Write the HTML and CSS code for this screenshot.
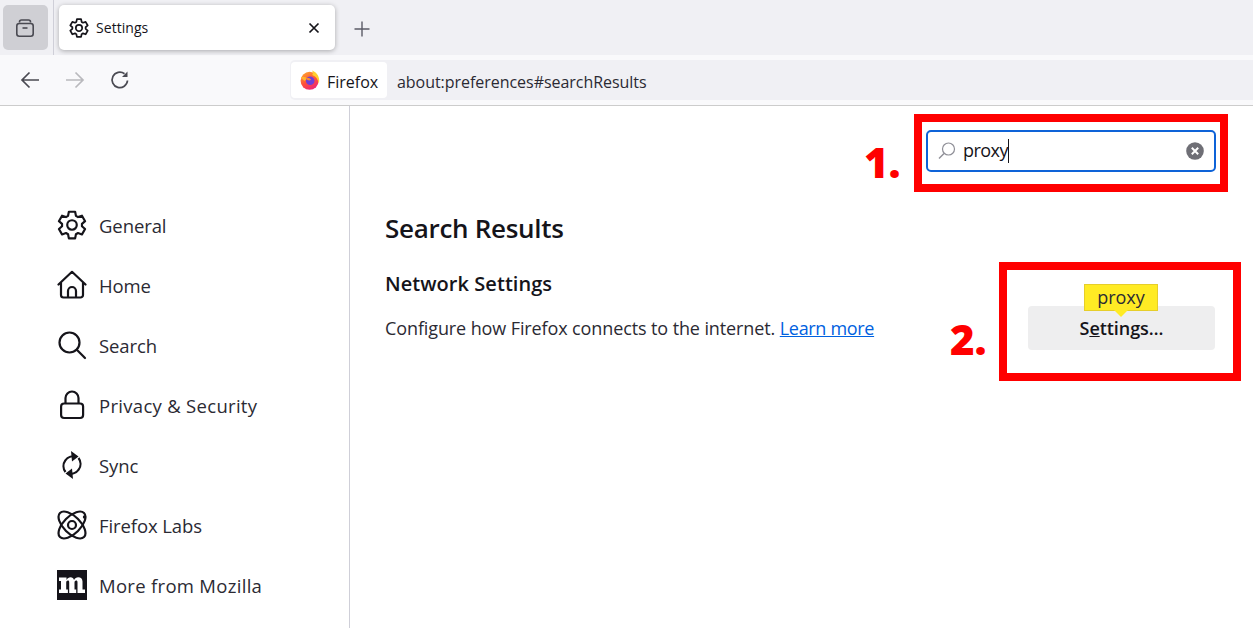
FILE: index.html
```html
<!DOCTYPE html>
<html lang="en">
<head>
<meta charset="utf-8">
<title>Settings</title>
<link rel="stylesheet" href="styles.css">
</head>
<body>
<div class="tabbar">
  <div class="tabs-btn"><svg class="i20" viewBox="0 0 20 20" fill="none" stroke="#4a4a52" stroke-width="1.6"><path d="M4.5 4.5V4a2 2 0 0 1 2-2h7a2 2 0 0 1 2 2v.5"/><rect x="1.8" y="5.5" width="16.4" height="12.7" rx="2.5"/><path d="M7.5 10h5"/></svg></div>
  <div class="divider"></div>
  <div class="tab">
    <svg class="i20" viewBox="1 1 22 22" fill="none" stroke="#15141a" stroke-width="1.9" stroke-linejoin="round"><use href="#gear"/></svg>
    <span class="tab-title">Settings</span>
    <svg class="tab-x" viewBox="0 0 12 12" stroke="#15141a" stroke-width="1.7" fill="none"><path d="M1.500 1.500l9 9M10.500 1.500l-9 9"/></svg>
  </div>
  <svg class="newtab" viewBox="0 0 16 16" stroke="#5b5b66" stroke-width="1.4" fill="none"><path d="M8 .5v15M.5 8h15"/></svg>
</div>
<div class="toolbar">
  <div class="nav">
    <svg class="i20" viewBox="0 0 20 20" fill="none" stroke="#4a4a52" stroke-width="1.7"><path d="M19 10H2M9.500 2.500L2 10l7.500 7.500"/></svg>
    <svg class="i20" viewBox="0 0 20 20" fill="none" stroke="#b9b9bd" stroke-width="1.7"><path d="M1 10h17M10.500 2.500L18 10l-7.500 7.500"/></svg>
    <svg class="i20" viewBox="0 0 20 20" fill="none" stroke="#4a4a52" stroke-width="1.7"><path d="M17.500 10.500A7.700 7.700 0 1 1 14.500 3.800"/><path d="M17.500 1.500v5.500h-5.500z" fill="#4a4a52" stroke="none"/></svg>
  </div>
  <div class="urlbar">
    <div class="identity">
      <svg class="fx" viewBox="0 0 20 20">
        <defs>
          <linearGradient id="fxa" x1=".2" y1="0" x2=".7" y2="1"><stop offset="0" stop-color="#ffa22e"/><stop offset=".55" stop-color="#ff4f3a"/><stop offset="1" stop-color="#e9237f"/></linearGradient>
        </defs>
        <circle cx="9.600" cy="10.800" r="9" fill="url(#fxa)"/>
        <path d="M12 .6c3 1 7.200 4.200 7.200 10 0 1-.2 2-.5 3-.7-4.500-3-7.500-6.500-8.600C13.200 3.800 13 2 12 .6z" fill="#ffcf30"/>
        <path d="M.8 7.500C3 5.800 6 7 7.500 8.500L4.500 11z" fill="#ffb32e"/>
        <circle cx="10.200" cy="10.700" r="4.300" fill="#6f3fd8"/>
        <path d="M5.500 8.500c2-1 4.800-.7 5.500 1.200-1 1.300-3.500 1-5.500-1.200z" fill="#ff8a2e"/>
      </svg>
      <span class="id-label">Firefox</span>
    </div>
    <span class="url">about:preferences#searchResults</span>
  </div>
</div>
<div class="page">
  <nav class="sidebar">
    <a class="cat"><svg class="i30" viewBox="1 1 22 22" fill="none" stroke="#15141a" stroke-width="1.600" stroke-linejoin="round"><use href="#gear"/></svg><span>General</span></a>
    <a class="cat"><svg class="i30" viewBox="0 0 30 30" fill="none" stroke="#15141a" stroke-width="2.200" stroke-linejoin="round" stroke-linecap="round"><path d="M1.500 14.500L15 1.800l13.500 12.700M4 12.500V25a2.500 2.500 0 0 0 2.500 2.500h17A2.500 2.500 0 0 0 26 25V12.500M11 27.500V21a4 4 0 0 1 8 0v6.500"/></svg><span>Home</span></a>
    <a class="cat"><svg class="i30" viewBox="0 0 30 30" fill="none" stroke="#15141a" stroke-width="2.200" stroke-linecap="round"><circle cx="12.500" cy="12.500" r="10"/><path d="M19.800 19.800L28 28"/></svg><span>Search</span></a>
    <a class="cat cat-wide"><svg class="i30" viewBox="0 0 30 30" fill="none" stroke="#15141a" stroke-width="2.200"><rect x="4.100" y="13.500" width="22" height="14.500" rx="3"/><path d="M8.500 13.500V8a6.500 6.500 0 0 1 13 0v5.500"/></svg><span>Privacy &amp; Security</span></a>
    <a class="cat"><svg class="i30" viewBox="0 0 30 30" fill="none" stroke="#15141a" stroke-width="2.200"><path d="M19.500 6.800A9.800 9.800 0 0 0 8.500 22"/><path d="M10.500 23.200A9.800 9.800 0 0 0 21.500 8"/><path d="M14 1l7.500 5.500-6.500 5z" fill="#15141a" stroke="none"/><path d="M16 29l-7.500-5.500 6.500-5z" fill="#15141a" stroke="none"/></svg><span>Sync</span></a>
    <a class="cat"><svg class="i30" viewBox="0 0 30 30" fill="none" stroke="#15141a" stroke-width="2.200"><ellipse cx="15" cy="15" rx="17" ry="8.500" transform="rotate(45 15 15)"/><ellipse cx="15" cy="15" rx="17" ry="8.500" transform="rotate(-45 15 15)"/><circle cx="15" cy="15" r="4"/><circle cx="27.500" cy="7" r="1.700" fill="#15141a" stroke="none"/></svg><span>Firefox Labs</span></a>
    <a class="cat cat-wide"><svg class="i30" viewBox="0 0 30 30"><rect width="30" height="30" fill="#15141a"/><path d="M2 19.500h2V11H2V7.500h7.500V10c1-1.800 2.400-2.700 4-2.700 1.900 0 3 1 3.500 2.700 1-1.800 2.400-2.700 4.200-2.700 2.600 0 4.300 1.500 4.300 4.300v7.900H28V23h-7.500V12.500c0-1.300-.4-1.900-1.300-1.900-1 0-1.700.8-1.700 2.200v6.700h1.700V23h-7v-10.500c0-1.300-.4-1.900-1.300-1.900-1 0-1.700.8-1.700 2.200v6.700h1.700V23H2z" fill="#fff"/></svg><span>More from Mozilla</span></a>
  </nav>
  <main class="content">
    <div class="search-row">
      <div class="search">
        <svg class="search-ic" viewBox="0 0 18 18" fill="none" stroke="#8f8f97" stroke-width="1.200"><circle cx="10.500" cy="7" r="6"/><path d="M6 11.500L1 16.500" stroke-width="1.500"/></svg>
        <span class="search-text">proxy</span><span class="caret"></span>
        <svg class="search-clear" viewBox="0 0 18 18"><circle cx="9" cy="9" r="8.800" fill="#6f6f76"/><path d="M5.800 5.800l6.400 6.400M12.200 5.800l-6.400 6.400" stroke="#fff" stroke-width="2"/></svg>
      </div>
    </div>
    <h1>Search Results</h1>
    <h2>Network Settings</h2>
    <div class="row">
      <p>Configure how Firefox connects to the internet. <a class="learn" href="#">Learn more</a></p>
      <button class="btn">S<u>e</u>ttings…<span class="hl">proxy</span></button>
    </div>
  </main>
</div>
<div class="mark mark-1"></div>
<div class="mark mark-2"></div>
<span class="mark-num num-1">1.</span>
<span class="mark-num num-2">2.</span>
<svg class="defs" width="0" height="0"><defs><path id="gear" d="M9.700 2.300h4.600l.6 3 1.500.9 2.900-1 2.300 4-2.300 2v1.700l2.300 2-2.300 4-2.900-1-1.500.9-.6 3H9.700l-.6-3-1.500-.9-2.900 1-2.300-4 2.300-2v-1.700l-2.300-2 2.300-4 2.900 1 1.500-.9zM12 8.500a3.500 3.500 0 1 0 0 7 3.500 3.500 0 0 0 0-7z"/></defs></svg>
</body>
</html>
```
FILE: styles.css
```css
* { box-sizing: border-box; }
html, body { margin: 0; height: 100%; overflow: hidden; }
body { width: 1253px; height: 628px; position: relative; background: #fff; color: #15141a; font-family: "Open Sans", "Noto Sans", sans-serif; }
.i20 { width: 20px; height: 20px; flex: none; }
.i30 { width: 30px; height: 30px; flex: none; }
.defs { position: absolute; }

.tabbar { height: 55px; background: #f0f0f4; display: flex; align-items: flex-start; padding: 5px 0 0 3px; }
.tabs-btn { width: 45px; height: 45px; background: #cfcfd4; border-radius: 5px; display: flex; align-items: center; justify-content: center; padding-right: 2px; }
.divider { width: 1px; height: 55px; margin: -5px 0 0 5px; background: #cfcfd8; }
.tab { width: 276px; height: 45px; margin-left: 5px; background: #fff; border-radius: 5px; box-shadow: 0 1px 5px rgba(0,0,0,.3); display: flex; align-items: center; padding: 0 15px 0 10px; gap: 7px; }
.tab-title { font-size: 14px; flex: 1; letter-spacing: .05px; }
.tab-x { width: 12px; height: 12px; }
.newtab { width: 16px; height: 16px; margin: 16px 0 0 19px; }

.toolbar { height: 51px; background: #f9f9fb; border-bottom: 1px solid #ccc; display: flex; align-items: center; }
.nav { width: 290px; display: flex; padding-left: 20px; gap: 25px; }
.urlbar { flex: 1; height: 40px; background: #f0f0f4; border-radius: 5px 0 0 5px; display: flex; align-items: center; padding: 0 0 0 1px; }
.identity { width: 96px; height: 36px; background: #fff; border-radius: 4px; display: flex; align-items: center; padding-left: 9px; gap: 7px; font-size: 16px; }
.id-label { padding-top: 3px; }
.fx { width: 20px; height: 20px; }
.url { font-size: 16px; margin-left: 10px; padding-top: 3px; letter-spacing: -.04px; color: #2b2a33; }

.page { display: flex; height: 522px; }
.sidebar { width: 350px; border-right: 1px solid #cfcfd8; padding-top: 89px; display: flex; flex-direction: column; }
.cat { height: 60px; display: flex; align-items: center; padding-left: 57px; gap: 12px; font-size: 18.500px; letter-spacing: -.1px; color: #2b2a33; }
.cat-wide { letter-spacing: .3px; }

.content { flex: 1; padding: 0 37px 0 35px; }
.search-row { display: flex; justify-content: flex-end; padding-top: 24px; }
.search { width: 290px; height: 42px; border: 2px solid #0e63d8; border-radius: 5px; display: flex; align-items: center; padding: 0 10px 0 10px; }
.search-ic { width: 18px; height: 18px; margin-right: 7px; }
.search-text { font-size: 18px; letter-spacing: -.55px; margin-top: -2px; }
.caret { width: 1px; height: 24px; background: #15141a; }
.search-clear { width: 18px; height: 18px; margin-left: auto; }

h1 { font-size: 26px; font-weight: 600; letter-spacing: -.3px; margin: 39px 0 0; line-height: 34px; }
h2 { font-size: 20px; font-weight: 600; letter-spacing: .05px; margin: 25px 0 0; line-height: 28px; }
.row { display: flex; justify-content: space-between; align-items: flex-start; margin-top: 8px; padding-right: 1px; }
.row p { margin: 10px 0 0; font-size: 18px; line-height: 24px; letter-spacing: -.11px; color: #2b2a33; }
.learn { color: #0061e0; letter-spacing: -.32px; }
.btn { position: relative; width: 187px; height: 44px; border: 0; border-radius: 4px; background: #eeeeef; font: 600 18px "Open Sans", sans-serif; letter-spacing: -.05px; color: #15141a; padding: 0; }
.hl { position: absolute; left: 56px; top: -22px; width: 74px; height: 27px; background: #ffeb24; border: 1px solid #e6ce2a; font-weight: 400; font-size: 18px; line-height: 24px; text-align: center; color: #2b2a33; }
.hl::after { content: ""; position: absolute; left: 29px; top: 25px; border: 7px solid transparent; border-top-color: #ffeb24; border-bottom: 0; }

.mark { position: absolute; border: 8px solid #f00; }
.mark-1 { left: 914px; top: 114px; width: 314px; height: 78px; }
.mark-2 { left: 999px; top: 262px; width: 242px; height: 119px; }
.mark-num { position: absolute; font: 800 42px/50px "Open Sans", sans-serif; color: #f00; }
.num-1 { left: 864px; top: 137px; }
.num-2 { left: 950px; top: 314px; }
```
